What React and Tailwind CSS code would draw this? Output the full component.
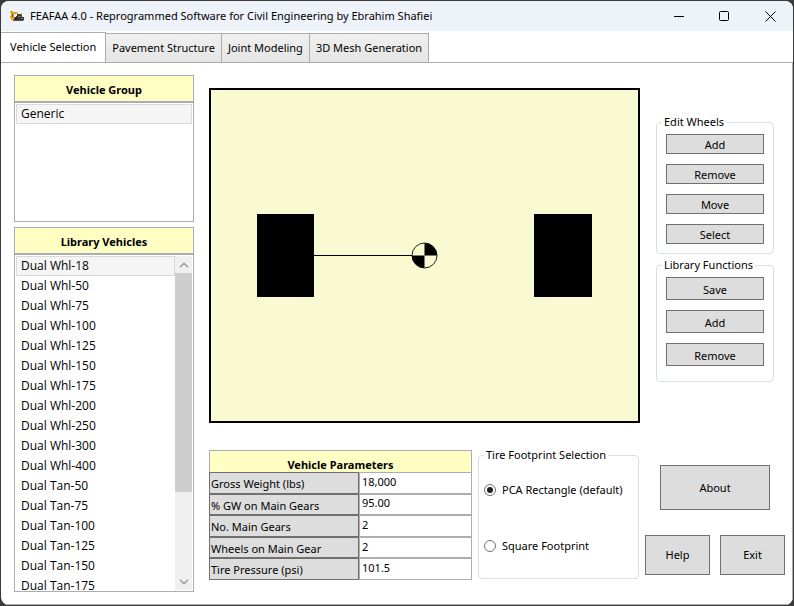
import React, { useState } from "react";
import { ChevronDown, ChevronUp } from "lucide-react";

const tabs = ["Vehicle Selection", "Pavement Structure", "Joint Modeling", "3D Mesh Generation"];

const vehicles = [
  "Dual Whl-18", "Dual Whl-50", "Dual Whl-75", "Dual Whl-100", "Dual Whl-125", "Dual Whl-150",
  "Dual Whl-175", "Dual Whl-200", "Dual Whl-250", "Dual Whl-300", "Dual Whl-400", "Dual Tan-50",
  "Dual Tan-75", "Dual Tan-100", "Dual Tan-125", "Dual Tan-150", "Dual Tan-175",
];

const parameters = [
  { id: "gross", label: "Gross Weight (lbs)", value: "18,000" },
  { id: "percent", label: "% GW on Main Gears", value: "95.00" },
  { id: "gears", label: "No. Main Gears", value: "2" },
  { id: "wheels", label: "Wheels on Main Gear", value: "2" },
  { id: "pressure", label: "Tire Pressure (psi)", value: "101.5" },
];

function AppIcon() {
  return (
    <svg viewBox="0 0 16 12" className="h-3 w-4 shrink-0" aria-hidden="true">
      <path d="M1 1h3v1h3v2H5v3h3v3H2V8H1V6h1V3H1z" fill="#e0a424" />
      <path d="M7 2h2v2H7z" fill="#f0b93c" />
      <path d="M3 4h1v3H3z" fill="#6b5220" />
      <path d="M8 4h4l1 1v2h2v3H7V6h1z" fill="#3d3a36" />
      <path d="M12 3h1v2h-1z" fill="#d9a02a" />
      <path d="M9 6h3v1H9z" fill="#7d7668" />
      <circle cx="7" cy="9" r="2" fill="#2b2b2b" />
      <circle cx="13" cy="9" r="2" fill="#2f2d2a" />
      <path d="M12 8h2v1h-2z" fill="#9c8a5c" />
      <path d="M4 10h10v1H4z" fill="#55524c" />
    </svg>
  );
}

function TitleBar() {
  return (
    <header className="flex h-[30px] items-center bg-[#eef3f9] pl-2">
      <AppIcon />
      <h1 className="ml-[5px] flex-1">
        FEAFAA 4.0 - Reprogrammed Software for Civil Engineering by Ebrahim Shafiei
      </h1>
      <button aria-label="Minimize" className="flex h-full w-[46px] items-center justify-center">
        <svg className="size-[11px]" viewBox="0 0 11 11"><path d="M0 5.5h10" stroke="#000" /></svg>
      </button>
      <button aria-label="Maximize" className="flex h-full w-[45px] items-center justify-center">
        <svg className="size-[11px]" viewBox="0 0 11 11"><rect x="0.5" y="0.5" width="9" height="9" rx="1" fill="none" stroke="#000" /></svg>
      </button>
      <button aria-label="Close" className="flex h-full w-[46px] items-center justify-center">
        <svg className="size-[11px]" viewBox="0 0 11 11"><path d="M0.5 0.5l10 10M10.5 0.5l-10 10" stroke="#000" /></svg>
      </button>
    </header>
  );
}

function PanelTitle({ children }) {
  return (
    <h2 className="flex h-[27px] items-center justify-center border border-[#abadb3] bg-[#ffffc4] pt-[2px] font-bold">
      {children}
    </h2>
  );
}

function ListItem({ selected, onClick, children }) {
  return (
    <li>
      <button
        onClick={onClick}
        className={`block h-5 w-full border pl-1 text-left font-['Open_Sans','Noto_Sans',sans-serif] text-[12px] leading-[18px] ${
          selected ? "border-[#dadada] bg-[#f5f5f5]" : "border-transparent"
        }`}
      >
        {children}
      </button>
    </li>
  );
}

function Scrollbar() {
  return (
    <div className="flex w-[17px] flex-col bg-[#f0f0f0]" aria-hidden="true">
      <div className="flex h-[17px] items-center justify-center">
        <ChevronUp className="size-[14px] text-[#a0a0a0]" strokeWidth={3} />
      </div>
      <div className="flex-1">
        <div className="h-[73%] bg-[#cdcdcd]" />
      </div>
      <div className="flex h-[17px] items-center justify-center">
        <ChevronDown className="size-[14px] text-[#a0a0a0]" strokeWidth={3} />
      </div>
    </div>
  );
}

function GearDrawing() {
  return (
    <div className="h-[335px] border-2 border-black bg-[#f9f9d2]">
      <svg viewBox="0 0 427 331" className="size-full" role="img" aria-label="Gear layout">
        <rect x="46" y="124" width="57" height="83" />
        <rect x="323" y="124" width="58" height="83" />
        <path d="M103 165.5h98" stroke="#000" />
        <circle cx="213.5" cy="165.5" r="12.5" fill="#f9f9d2" stroke="#222" />
        <path d="M213.5 165.5v-12.5a12.5 12.5 0 0 1 12.5 12.5zM213.5 165.5v12.5a12.5 12.5 0 0 1-12.5-12.5z" />
      </svg>
    </div>
  );
}

function Group({ title, className, children }) {
  return (
    <fieldset className={`rounded-[4px] border border-[#d5dfe5] ${className}`}>
      <legend className="ml-[5px] px-[2px] leading-4">{title}</legend>
      {children}
    </fieldset>
  );
}

function PushButton({ className, children }) {
  return (
    <button className={`flex items-center justify-center border border-[#707070] bg-[#dddddd] ${className}`}>
      {children}
    </button>
  );
}

function Footprint({ label, value, current, onChange }) {
  return (
    <label className="flex items-center gap-[6px]">
      <input
        type="radio"
        name="footprint"
        checked={current === value}
        onChange={() => onChange(value)}
        className="size-3 appearance-none rounded-full border border-[#707070] bg-white bg-clip-content p-[2px] checked:bg-[#212121]"
      />
      {label}
    </label>
  );
}

export default function App() {
  const [tab, setTab] = useState(tabs[0]);
  const [vehicle, setVehicle] = useState(vehicles[0]);
  const [footprint, setFootprint] = useState("pca");

  return (
    <div className="flex min-h-screen bg-[#3a3a3c] p-px font-['Noto_Sans','Open_Sans',sans-serif] text-[11px] leading-4 text-black">
      <div className="flex flex-1 flex-col overflow-hidden rounded-lg bg-white">
        <TitleBar />
        <nav className="flex h-8 items-end border-b border-[#acacac] pt-px">
          {tabs.map((name) => (
            <button
              key={name}
              onClick={() => setTab(name)}
              className={`border border-b-0 border-l-0 border-[#acacac] ${
                name === tab ? "h-[30px] bg-white px-[9px] pb-[2px]" : "h-[29px] bg-linear-to-b from-[#f0f0f0] to-[#e5e5e5] px-[6px]"
              }`}
            >
              {name}
            </button>
          ))}
        </nav>

        <main className="flex flex-1 gap-[15px] border-r border-b border-[#acacac] pt-3 pb-3 pl-[13px]">
          <div className="flex w-[180px] shrink-0 flex-col">
            <PanelTitle>Vehicle Group</PanelTitle>
            <ul className="h-[120px] border border-[#abadb3] p-px">
              <ListItem selected>Generic</ListItem>
            </ul>
            <div className="mt-[5px]">
              <PanelTitle>Library Vehicles</PanelTitle>
            </div>
            <div className="flex h-[338px] border border-[#abadb3] p-px">
              <ul className="flex-1 overflow-hidden">
                {vehicles.map((name) => (
                  <ListItem key={name} selected={name === vehicle} onClick={() => setVehicle(name)}>
                    {name}
                  </ListItem>
                ))}
              </ul>
              <Scrollbar />
            </div>
          </div>

          <div className="flex min-w-0 flex-1 flex-col gap-6 pt-[13px]">
            <div className="flex gap-4 pr-[18px]">
              <div className="min-w-0 flex-1">
                <GearDrawing />
              </div>
              <div className="flex w-[118px] flex-col gap-[3px] pt-[26px]">
                <Group title="Edit Wheels" className="h-[140px]">
                  <div className="flex flex-col gap-[10px] px-[9px] pt-1">
                    {["Add", "Remove", "Move", "Select"].map((name) => (
                      <PushButton key={name} className="h-5 pt-[2px]">{name}</PushButton>
                    ))}
                  </div>
                </Group>
                <Group title="Library Functions" className="h-[125px]">
                  <div className="flex flex-col gap-[10px] px-[9px] pt-1">
                    {["Save", "Add", "Remove"].map((name) => (
                      <PushButton key={name} className="h-[23px] pt-[2px]">{name}</PushButton>
                    ))}
                  </div>
                </Group>
              </div>
            </div>

            <div className="flex items-start pr-[7px]">
              <section className="min-w-0 flex-1 pt-[3px]">
                <h2 className="flex h-[22px] items-end justify-center border border-b-0 border-[#abadb3] bg-[#ffffc4] leading-[14px] font-bold">
                  Vehicle Parameters
                </h2>
                <div className="grid h-[108px] grid-cols-1 grid-rows-5">
                  {parameters.map((item) => (
                    <div key={item.id} className="flex min-w-0">
                      <label htmlFor={item.id} className="w-[150px] shrink-0 border border-[#707070] bg-[#dddddd] pt-[3px] pl-px">
                        {item.label}
                      </label>
                      <input
                        id={item.id}
                        defaultValue={item.value}
                        className="min-w-0 flex-1 border border-[#abadb3] bg-white px-[2px] pb-[2px]"
                      />
                    </div>
                  ))}
                </div>
              </section>
              <Group title="Tire Footprint Selection" className="ml-[6px] h-[132px] w-[161px]">
                <div className="flex flex-col gap-10 pt-[19px] pl-[5px]">
                  <Footprint label="PCA Rectangle (default)" value="pca" current={footprint} onChange={setFootprint} />
                  <Footprint label="Square Footprint" value="square" current={footprint} onChange={setFootprint} />
                </div>
              </Group>
              <div className="ml-[6px] flex w-[140px] flex-col items-center gap-[25px] pt-[18px]">
                <PushButton className="h-[45px] w-[110px]">About</PushButton>
                <div className="flex gap-[10px]">
                  <PushButton className="h-10 w-[65px]">Help</PushButton>
                  <PushButton className="h-10 w-[65px]">Exit</PushButton>
                </div>
              </div>
            </div>
          </div>
        </main>
      </div>
    </div>
  );
}
